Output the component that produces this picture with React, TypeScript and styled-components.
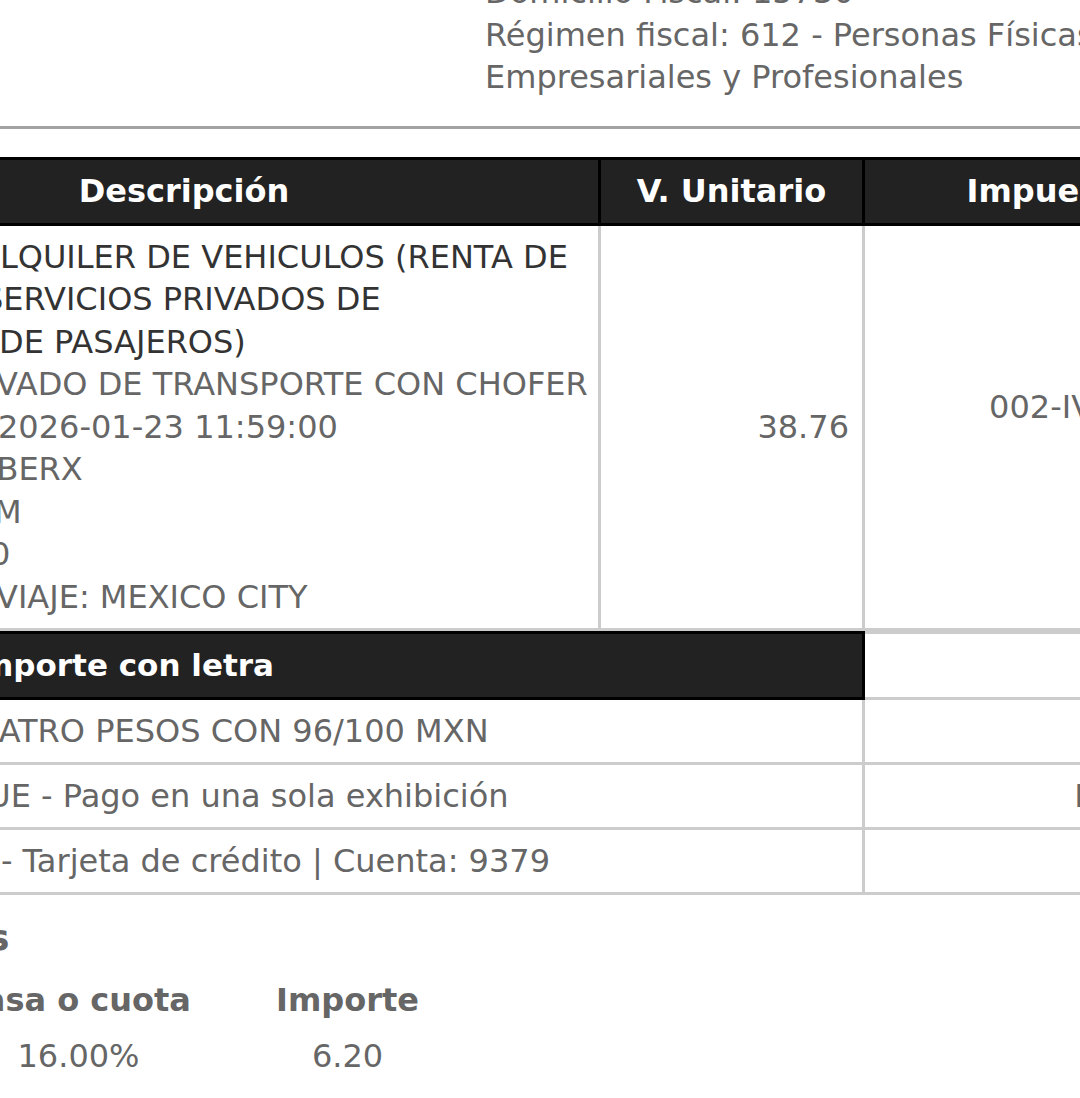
import React from "react";
import styled, { createGlobalStyle } from "styled-components";

const GlobalStyle = createGlobalStyle`
  html, body {
    margin: 0;
    padding: 0;
    background: #fff;
  }

  body {
    font-family: "DejaVu Sans", "Liberation Sans", sans-serif;
    font-size: 32px;
    line-height: 42.5px;
    color: #666;
  }
`;

const Page = styled.div`
  width: 1080px;
  height: 1098px;
  overflow: hidden;
`;

/* issuer info, the top of it is above the visible area */
const Issuer = styled.div`
  margin: -29px 0 0 485px;
  white-space: nowrap;
`;

const Rule = styled.hr`
  margin: 27px 0 0;
  border: 0;
  height: 3px;
  background: #a3a3a3;
`;

// the sheet is wider than the crop, so the tables start left of the screen
const ConceptGrid = styled.div`
  display: grid;
  grid-template-columns: 834px 264px 394px 300px;
  margin: 28.5px 0 0 -233px;
`;

const HeadCell = styled.div<{ $first?: boolean }>`
  background: #222;
  color: #fff;
  font-weight: bold;
  text-align: center;
  padding: 10px 14px;
  border: 3px solid #000;
  border-left-width: ${(p) => (p.$first ? 3 : 0)}px;
  white-space: nowrap;
  overflow: hidden;
`;

const BodyCell = styled.div<{ $first?: boolean; $align?: "left" | "center" | "right" }>`
  display: flex;
  flex-direction: column;
  justify-content: center;
  text-align: ${(p) => p.$align ?? "left"};
  padding: 10px 13px;
  border-right: 3px solid #ccc;
  border-bottom: 3px solid #ccc;
  border-left: ${(p) => (p.$first ? "3px solid #ccc" : "0")};
  white-space: nowrap;
  overflow: hidden;
`;

const DescCell = styled(BodyCell)`
  justify-content: flex-start;
  padding-left: 230px;
`;

const TaxCell = styled(BodyCell)`
  padding: 10px 32px 49px 13px;
`;

/* a line whose first word runs off the left edge */
const Cut = styled.span<{ $by: number }>`
  display: block;
  margin-left: -${(p) => p.$by}px;
  white-space: nowrap;
`;

const DescLine = styled(Cut)<{ $strong?: boolean }>`
  color: ${(p) => (p.$strong ? "#333" : "#666")};
`;

const TotalsGrid = styled.div`
  display: grid;
  grid-template-columns: 885px 643px;
  margin-left: -20px;
`;

const TotalsHead = styled.div`
  background: #222;
  color: #fff;
  font-weight: bold;
  font-size: 31px;
  padding: 10px 0 10px 17px;
  border: 3px solid #000;
  white-space: nowrap;
  overflow: hidden;
`;

const TotalsCell = styled.div<{ $side?: boolean; $top?: boolean }>`
  padding-top: 10px;
  padding-bottom: ${(p) => (p.$top ? 10 : 9.5)}px;
  padding-left: ${(p) => (p.$side ? 0 : 17)}px;
  text-align: ${(p) => (p.$side ? "center" : "left")};
  border-bottom: 3px solid #ccc;
  border-top: ${(p) => (p.$top ? "3px solid #ccc" : "0")};
  border-right: 3px solid #ccc;
  border-left: ${(p) => (p.$side ? "0" : "3px solid #ccc")};
  white-space: nowrap;
  overflow: hidden;
`;

const SectionTitle = styled.h3`
  margin: 21.5px 0 0 -202px;
  font-size: 36px;
  line-height: 43px;
  font-weight: bold;
  color: #666;
  white-space: nowrap;
`;

const TaxGrid = styled.div`
  display: grid;
  grid-template-columns: 311px 227px;
  margin: 13px 0 0 -77px;
  text-align: center;
  white-space: nowrap;
`;

const TaxHead = styled.div`
  padding: 7px 0 6.5px;
  font-weight: bold;
  color: #666;
`;

const TaxValue = styled.div`
  padding: 7px 0 6.5px;
`;

type ConceptLine = { text: string; cut: number; strong?: boolean };

const conceptLines: ConceptLine[] = [
  { text: "ALQUILER DE VEHICULOS (RENTA DE", cut: 22, strong: true },
  { text: "SERVICIOS PRIVADOS DE", cut: 17, strong: true },
  { text: "DE PASAJEROS)", cut: 1, strong: true },
  { text: "PRIVADO DE TRANSPORTE CON CHOFER", cut: 55 },
  { text: "2026-01-23 11:59:00", cut: 2 },
  { text: "UBERX", cut: 27 },
  { text: "KM", cut: 27 },
  { text: "0", cut: 10 },
  { text: "VIAJE: MEXICO CITY", cut: 4 },
];

const totalsRows = [
  { text: "CUARENTA Y CUATRO PESOS CON 96/100 MXN", cut: 260, side: "Versión: 4.0" },
  { text: "PUE - Pago en una sola exhibición", cut: 32, side: "Moneda: MXN" },
  { text: "04 - Tarjeta de crédito | Cuenta: 9379", cut: 50, side: "Total: 44.96" },
];

export default function App() {
  return (
    <Page>
      <GlobalStyle />
      <Issuer>
        <div>Domicilio Fiscal: 15730</div>
        <div>Régimen fiscal: 612 - Personas Físicas con Actividades</div>
        <div>Empresariales y Profesionales</div>
      </Issuer>
      <Rule />

      <ConceptGrid>
        <HeadCell $first>Descripción</HeadCell>
        <HeadCell>V. Unitario</HeadCell>
        <HeadCell>Impuestos</HeadCell>
        <HeadCell>Importe</HeadCell>

        <DescCell $first>
          {conceptLines.map((line) => (
            <DescLine key={line.text} $by={line.cut} $strong={line.strong}>
              {line.text}
            </DescLine>
          ))}
        </DescCell>
        <BodyCell $align="right">38.76</BodyCell>
        <TaxCell $align="center">002-IVA</TaxCell>
        <BodyCell $align="right">38.76</BodyCell>
      </ConceptGrid>

      <TotalsGrid>
        <TotalsHead>
          <Cut $by={30.5}>Importe con letra</Cut>
        </TotalsHead>
        <TotalsCell $side $top />
        {totalsRows.map((row) => (
          <React.Fragment key={row.text}>
            <TotalsCell>
              <Cut $by={row.cut}>{row.text}</Cut>
            </TotalsCell>
            <TotalsCell $side>{row.side}</TotalsCell>
          </React.Fragment>
        ))}
      </TotalsGrid>

      <SectionTitle>Impuestos</SectionTitle>
      <TaxGrid>
        <TaxHead>Tasa o cuota</TaxHead>
        <TaxHead>Importe</TaxHead>
        <TaxValue>16.00%</TaxValue>
        <TaxValue>6.20</TaxValue>
      </TaxGrid>
    </Page>
  );
}
